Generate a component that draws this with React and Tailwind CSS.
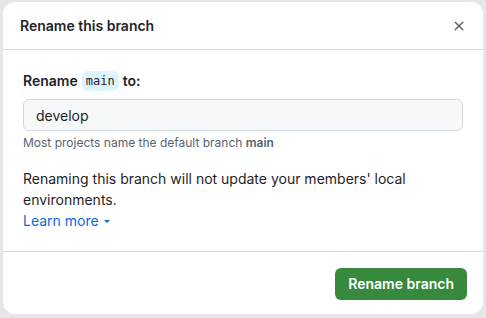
import React from "react";

const sans = { fontFamily: "Inter, 'Liberation Sans', sans-serif" };

function CloseIcon() {
  return (
    <svg width="16" height="16" viewBox="0 0 16 16" fill="currentColor">
      <path d="M3.72 3.72a.75.75 0 0 1 1.06 0L8 6.94l3.22-3.22a.749.749 0 0 1 1.275.326.749.749 0 0 1-.215.734L9.06 8l3.22 3.22a.749.749 0 0 1-.326 1.275.749.749 0 0 1-.734-.215L8 9.06l-3.22 3.22a.751.751 0 0 1-1.042-.018.751.751 0 0 1-.018-1.042L6.94 8 3.72 4.78a.75.75 0 0 1 0-1.06Z" />
    </svg>
  );
}

export default function App() {
  return (
    <div className="w-[486px] h-[318px] bg-[#e4e6e9] overflow-hidden pt-[2px] pl-[3px]" style={sans}>
      <div className="w-[480px] h-[312px] bg-white rounded-xl flex flex-col text-[#1f2328]">
        {/* Header */}
        <div className="h-12 flex items-center justify-between px-4 border-b border-[#d1d9e0]">
          <h2 className="text-sm font-semibold pl-[1px]">Rename this branch</h2>
          <button className="text-[#59636e]">
            <CloseIcon />
          </button>
        </div>

        {/* Body */}
        <div className="flex-1 px-5 pt-[21px]">
          <label className="flex items-center text-sm font-semibold h-5">
            Rename
            <code
              className="mx-1 px-1 h-5 flex items-center rounded-md bg-[#ddf4ff] text-xs font-normal"
              style={{ fontFamily: "'DejaVu Sans Mono', 'Liberation Mono', monospace" }}
            >
              main
            </code>
            to:
          </label>
          <input
            className="mt-2 w-full h-8 rounded-md border border-[#d1d9e0] bg-[#f6f8fa] px-3 text-sm outline-none"
            defaultValue="develop"
            style={sans}
          />
          <p className="mt-[3px] text-xs leading-[18px] text-[#59636e]">
            Most projects name the default branch <span className="font-semibold text-[#59636e]">main</span>
          </p>
          <p className="mt-4 text-sm leading-[21px]">
            Renaming this branch will not update your members' local environments.
          </p>
          <a className="flex items-center gap-1 text-sm leading-[21px] text-[#0969da]">
            Learn more
            <svg width="8" height="8" viewBox="0 0 8 8" fill="currentColor">
              <path d="M1 3h6L4 6Z" />
            </svg>
          </a>
        </div>

        {/* Footer */}
        <div className="border-t border-[#d1d9e0] flex justify-end px-4 pt-4 pb-[14px]">
          <button className="h-8 px-[13px] rounded-md bg-[#378a3d] text-white text-sm font-semibold">
            Rename branch
          </button>
        </div>
      </div>
    </div>
  );
}
